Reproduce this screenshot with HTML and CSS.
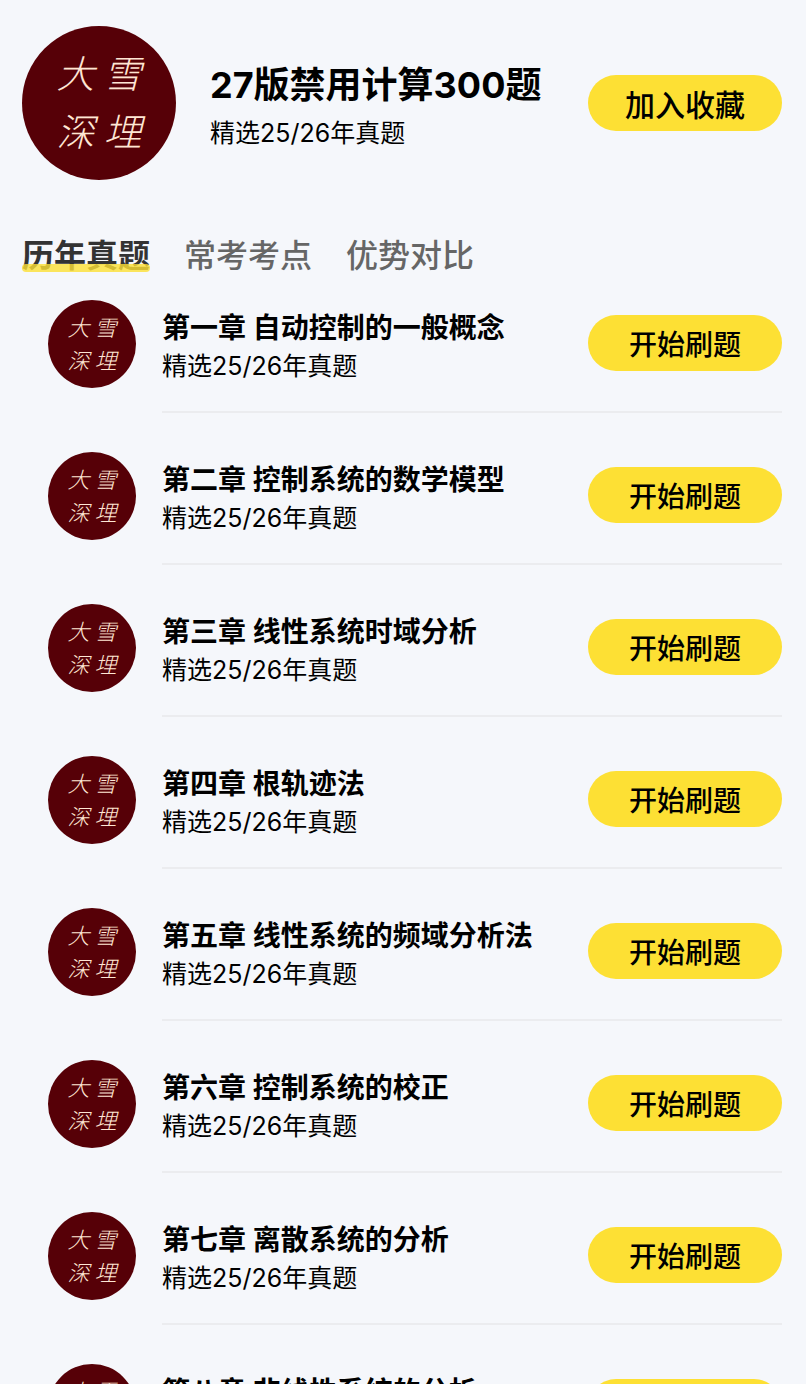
FILE: index.html
```
<!DOCTYPE html>
<html lang="zh-CN">
<head>
  <meta charset="UTF-8" />
  <meta name="viewport" content="width=device-width, initial-scale=1.0"/>
  <title>27版禁用计算300题</title>
  <link rel="stylesheet" href="styles.css">
</head>
<body>
  <main class="page">
    <!-- Book header -->
    <header class="book">
      <div class="avatar avatar-large"><span>大</span><span>雪</span><span>深</span><span>埋</span></div>
      <div class="info">
        <h1 class="book-title">27版禁用计算300题</h1>
        <p class="desc">精选25/26年真题</p>
      </div>
      <button type="button" class="btn btn-large">加入收藏</button>
    </header>

    <nav class="tabs">
      <button type="button" class="tab active">历年真题</button>
      <button type="button" class="tab">常考考点</button>
      <button type="button" class="tab">优势对比</button>
    </nav>

    <!-- Chapters -->
    <ul class="chapters">
      <li class="chapter">
        <div class="avatar"><span>大</span><span>雪</span><span>深</span><span>埋</span></div>
        <div class="chapter-body">
          <div class="info">
            <h2 class="chapter-title">第一章 自动控制的一般概念</h2>
            <p class="desc">精选25/26年真题</p>
          </div>
          <button type="button" class="btn">开始刷题</button>
        </div>
      </li>
      <li class="chapter">
        <div class="avatar"><span>大</span><span>雪</span><span>深</span><span>埋</span></div>
        <div class="chapter-body">
          <div class="info">
            <h2 class="chapter-title">第二章 控制系统的数学模型</h2>
            <p class="desc">精选25/26年真题</p>
          </div>
          <button type="button" class="btn">开始刷题</button>
        </div>
      </li>
      <li class="chapter">
        <div class="avatar"><span>大</span><span>雪</span><span>深</span><span>埋</span></div>
        <div class="chapter-body">
          <div class="info">
            <h2 class="chapter-title">第三章 线性系统时域分析</h2>
            <p class="desc">精选25/26年真题</p>
          </div>
          <button type="button" class="btn">开始刷题</button>
        </div>
      </li>
      <li class="chapter">
        <div class="avatar"><span>大</span><span>雪</span><span>深</span><span>埋</span></div>
        <div class="chapter-body">
          <div class="info">
            <h2 class="chapter-title">第四章 根轨迹法</h2>
            <p class="desc">精选25/26年真题</p>
          </div>
          <button type="button" class="btn">开始刷题</button>
        </div>
      </li>
      <li class="chapter">
        <div class="avatar"><span>大</span><span>雪</span><span>深</span><span>埋</span></div>
        <div class="chapter-body">
          <div class="info">
            <h2 class="chapter-title">第五章 线性系统的频域分析法</h2>
            <p class="desc">精选25/26年真题</p>
          </div>
          <button type="button" class="btn">开始刷题</button>
        </div>
      </li>
      <li class="chapter">
        <div class="avatar"><span>大</span><span>雪</span><span>深</span><span>埋</span></div>
        <div class="chapter-body">
          <div class="info">
            <h2 class="chapter-title">第六章 控制系统的校正</h2>
            <p class="desc">精选25/26年真题</p>
          </div>
          <button type="button" class="btn">开始刷题</button>
        </div>
      </li>
      <li class="chapter">
        <div class="avatar"><span>大</span><span>雪</span><span>深</span><span>埋</span></div>
        <div class="chapter-body">
          <div class="info">
            <h2 class="chapter-title">第七章 离散系统的分析</h2>
            <p class="desc">精选25/26年真题</p>
          </div>
          <button type="button" class="btn">开始刷题</button>
        </div>
      </li>
      <li class="chapter">
        <div class="avatar"><span>大</span><span>雪</span><span>深</span><span>埋</span></div>
        <div class="chapter-body">
          <div class="info">
            <h2 class="chapter-title">第八章 非线性系统的分析</h2>
            <p class="desc">精选25/26年真题</p>
          </div>
          <button type="button" class="btn">开始刷题</button>
        </div>
      </li>
    </ul>
  </main>
</body>
</html>
```

FILE: styles.css
```
:root {
  --bg: #f5f7fb;
  --yellow: #fde034;
  --maroon: #560007;
  --cream: #ffe6d4;
  --line: #ebecef;
}

* {
  box-sizing: border-box;
}

body {
  margin: 0;
  background-color: var(--bg);
  color: #000;
  font-family: Inter, 'Noto Sans CJK SC', sans-serif;
}

h1,
h2,
p,
ul {
  margin: 0;
  padding: 0;
}

button {
  border: none;
  padding: 0;
  font-family: inherit;
  font-weight: 500;
  cursor: pointer;
}

.page {
  height: 100vh;
  overflow-y: auto;
  scrollbar-width: none;
  padding: 26px 24px 0 22px;
}

.book {
  display: flex;
  align-items: center;
  gap: 34px;
}

.info {
  flex: 1;
}

.avatar {
  flex: none;
  width: 88px;
  height: 88px;
  border-radius: 50%;
  background-color: var(--maroon);
  color: var(--cream);
  display: grid;
  grid-template-columns: 27px 27px;
  grid-auto-rows: 33px;
  place-content: center;
  place-items: center;
  font-size: 22px;
  font-weight: 300;
  font-style: italic;
  line-height: 1;
}

.avatar-large {
  width: 154px;
  height: 154px;
  grid-template-columns: 47px 47px;
  grid-auto-rows: 58px;
  font-size: 38px;
}

.book-title {
  font-size: 36px;
  line-height: 60px;
  font-weight: 700;
}

.desc {
  font-size: 25px;
  line-height: 36px;
}

.btn {
  flex: none;
  width: 194px;
  height: 56px;
  border-radius: 28px;
  background-color: var(--yellow);
  color: #000;
  font-size: 28px;
}

.btn-large {
  font-size: 30px;
}

.tabs {
  display: flex;
  gap: 34px;
  margin-top: 52px;
}

.tab {
  position: relative;
  background: none;
  color: #666;
  font-size: 32px;
  line-height: 48px;
}

.tab.active {
  color: #333;
  font-weight: 700;
}

/* marker stroke over the foot of the text */
.tab.active::after {
  content: "";
  position: absolute;
  left: 0;
  right: 0;
  bottom: 8px;
  height: 8px;
  border-radius: 4px;
  background-color: var(--yellow);
  opacity: 0.8;
}

.chapters {
  list-style: none;
  margin-top: 20px;
  padding-left: 26px;
}

.chapter {
  display: flex;
  gap: 26px;
  margin-bottom: 39px;
}

.chapter-body {
  flex: 1;
  display: flex;
  height: 113px;
  padding-bottom: 26px;
  align-items: center;
  border-bottom: 2px solid var(--line);
}

.chapter-body .info {
  padding-top: 6px;
}

.chapter-title {
  font-size: 28px;
  line-height: 40px;
  font-weight: 700;
}
```
